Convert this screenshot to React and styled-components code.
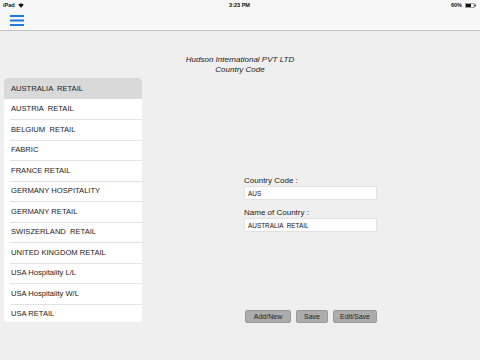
import React from 'react';
import styled, { createGlobalStyle } from 'styled-components';

const GlobalStyle = createGlobalStyle`
  html, body {
    margin: 0;
    padding: 0;
    background: #efefef;
    font-family: "Liberation Sans", Arial, sans-serif;
    color: #222;
  }
`

const Page = styled.div`
  width: 480px;
  height: 360px;
  overflow: hidden;
  display: flex;
  flex-direction: column;
`

const StatusBar = styled.div`
  height: 10px;
  display: grid;
  grid-template-columns: 1fr auto 1fr;
  align-items: center;
  padding: 0 4px 0 3px;
  font-size: 5.5px;
  font-weight: bold;
  color: #111;
  background: #f7f7f7;
`

const StatusSide = styled.div`
  display: flex;
  align-items: center;
  gap: 3px;
  justify-content: ${p => (p.right ? 'flex-end' : 'flex-start')};
`

const NavBar = styled.div`
  height: 20px;
  background: #f7f7f7;
  border-bottom: 1px solid #c4c4c4;
  display: flex;
  align-items: center;
  padding-left: 10px;
`

const Header = styled.div`
  padding-top: 24px;
  text-align: center;
  font-style: italic;
  font-size: 8px;
  line-height: 9.5px;
  color: #222;
  height: 23px;
`

const Body = styled.div`
  display: flex;
  padding-left: 4px;
`

const List = styled.ul`
  margin: 0;
  padding: 0;
  list-style: none;
  width: 138px;
  height: 244px;
  overflow: hidden;
  background: #fff;
  border-radius: 4px;
`

const Row = styled.li`
  height: 20.5px;
  box-sizing: border-box;
  display: flex;
  align-items: center;
  padding-left: 7px;
  font-size: 7.6px;
  white-space: pre;
  color: #1a1a1a;
  background: ${p => (p.selected ? '#d9d9d9' : '#fff')};
  position: relative;

  & + &::before {
    content: '';
    position: absolute;
    top: 0;
    left: 6px;
    right: 0;
    height: 1px;
    background: #e2e2e2;
  }
`

const Form = styled.div`
  margin-left: 102px;
  padding-top: 98px;
  width: 133px;
  display: flex;
  flex-direction: column;
`

const Label = styled.div`
  font-size: 8px;
  line-height: 10px;
  color: #222;
  margin-top: ${p => p.gap || 0}px;
`

const Input = styled.div`
  height: 14px;
  box-sizing: border-box;
  background: #fff;
  border: 1px solid #e2e2e2;
  border-radius: 2px;
  font-size: 6.4px;
  white-space: pre;
  display: flex;
  align-items: center;
  padding-left: 3px;
  color: #111;
`

const Buttons = styled.div`
  display: flex;
  gap: 5px;
  margin-top: 78px;
  padding-left: 1px;
`

const Button = styled.button`
  width: ${p => p.w}px;
  height: 13px;
  padding: 0;
  background: #acacac;
  border: 1px solid #9a9a9a;
  border-radius: 2px;
  font-family: "Liberation Sans", Arial, sans-serif;
  font-size: 7px;
  color: #1d1d1d;
`

const items = [
  'AUSTRALIA  RETAIL',
  'AUSTRIA  RETAIL',
  'BELGIUM  RETAIL',
  'FABRIC',
  'FRANCE RETAIL',
  'GERMANY HOSPITALITY',
  'GERMANY RETAIL',
  'SWISZERLAND  RETAIL',
  'UNITED KINGDOM RETAIL',
  'USA Hospitality L/L',
  'USA Hospitality W/L',
  'USA RETAIL',
];

const App = () => {
  return (
    <Page>
      <GlobalStyle />
      <StatusBar>
        <StatusSide>
          iPad
          <svg width="6" height="5" viewBox="0 0 12 9">
            <path d="M6 9 L0.5 3 A8 8 0 0 1 11.5 3 Z" fill="#111" />
          </svg>
        </StatusSide>
        <span>3:23 PM</span>
        <StatusSide right>
          60%
          <svg width="11" height="5" viewBox="0 0 22 10">
            <rect x="0.5" y="0.5" width="18" height="9" rx="2" fill="none" stroke="#111" />
            <rect x="2" y="2" width="10" height="6" fill="#111" />
            <rect x="19.5" y="3" width="2" height="4" fill="#111" />
          </svg>
        </StatusSide>
      </StatusBar>
      <NavBar>
        <svg width="14" height="11" viewBox="0 0 14 11">
          <rect x="0" y="0" width="14" height="2" fill="#1f78e0" />
          <rect x="0" y="4.5" width="14" height="2" fill="#1f78e0" />
          <rect x="0" y="9" width="14" height="2" fill="#1f78e0" />
        </svg>
      </NavBar>
      <Header>
        Hudson International PVT LTD
        <br />
        Country Code
      </Header>
      <Body>
        <List>
          {items.map((t, i) => (
            <Row key={t} selected={i === 0}>{t}</Row>
          ))}
        </List>
        <Form>
          <Label>Country Code :</Label>
          <Input>AUS</Input>
          <Label gap={8}>Name of Country :</Label>
          <Input>AUSTRALIA  RETAIL</Input>
          <Buttons>
            <Button w={46}>Add/New</Button>
            <Button w={32}>Save</Button>
            <Button w={44}>Edit/Save</Button>
          </Buttons>
        </Form>
      </Body>
    </Page>
  );
}

export default App;
